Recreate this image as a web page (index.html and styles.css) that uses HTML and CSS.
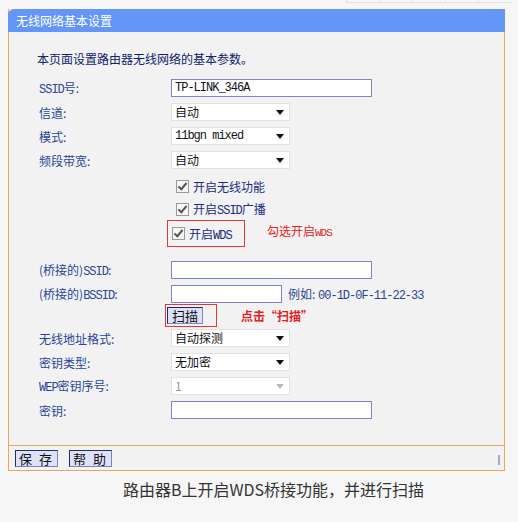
FILE: index.html
```html
<!DOCTYPE html>
<html>
<head>
<meta charset="utf-8">
<link rel="stylesheet" href="styles.css">
</head>
<body>
<div class="topline"><span></span><span></span><span></span><span></span><span></span></div>
<div class="panel">
  <div class="title">无线网络基本设置</div>
  <div class="content">
    <div class="intro">本页面设置路由器无线网络的基本参数。</div>
    <div class="row"><div class="label"><span class="m">SSID</span>号:</div><div class="input wide mono">TP-LINK_346A</div></div>
    <div class="row"><div class="label">信道:</div><div class="select">自动<i class="arrow"></i></div></div>
    <div class="row"><div class="label">模式:</div><div class="select mono">11bgn mixed<i class="arrow"></i></div></div>
    <div class="row"><div class="label">频段带宽:</div><div class="select">自动<i class="arrow"></i></div></div>
    <div class="row chk"><div class="label"></div><div class="check"><span class="box"></span><span>开启无线功能</span></div></div>
    <div class="row chk2"><div class="label"></div><div class="check"><span class="box"></span><span>开启<span class="m">SSID</span>广播</span></div></div>
    <div class="row wds"><div class="label"></div><div class="redbox"><div class="check"><span class="box"></span><span>开启<span class="m">WDS</span></span></div></div><div class="note">勾选开启<span class="m">WDS</span></div></div>
    <div class="row gapb"><div class="label">(桥接的)<span class="m">SSID</span>:</div><div class="input wide"></div></div>
    <div class="row bssid"><div class="label">(桥接的)<span class="m">BSSID</span>:</div><div class="input narrow"></div><div class="eg">例如: <span class="m">00-1D-0F-11-22-33</span></div></div>
    <div class="row scan"><div class="label"></div><div class="redbox2"><span class="btn">扫描</span></div><div class="note2">点击“扫描”</div></div>
    <div class="row"><div class="label">无线地址格式:</div><div class="select">自动探测<i class="arrow"></i></div></div>
    <div class="row"><div class="label">密钥类型:</div><div class="select">无加密<i class="arrow"></i></div></div>
    <div class="row"><div class="label"><span class="m">WEP</span>密钥序号:</div><div class="select dis">1<i class="arrow"></i></div></div>
    <div class="row"><div class="label">密钥:</div><div class="input wide"></div></div>
  </div>
  <div class="footer"><span class="fbtn">保 存</span><span class="fbtn">帮 助</span><i class="tick"></i></div>
</div>
<div class="caption">路由器B上开启WDS桥接功能，并进行扫描</div>
</body>
</html>
```

FILE: styles.css
```css
html, body { margin: 0; padding: 0; }
body {
  width: 518px;
  height: 522px;
  background: #f6f6f6;
  font-family: "Noto Sans CJK SC", "Noto Sans", sans-serif;
  font-size: 12px;
  overflow: hidden;
}
.topline {
  height: 3px;
  display: flex;
  justify-content: flex-end;
  padding-right: 7px;
}
.topline span {
  width: 32px;
  border-left: 1px solid #e4e4e4;
  border-bottom: 1px solid #e4e4e4;
}
.panel {
  margin: 6px 0 0 8px;
  width: 495px;
  border-left: 1px solid #e4a860;
  border-right: 1px solid #e4a860;
  border-bottom: 1px solid #e4a860;
  background: #f2f2f2;
}
.title {
  height: 23px;
  line-height: 23px;
  background: #6396f7;
  color: #fff;
  padding-left: 8px;
  border-top-left-radius: 6px;
  margin-left: -1px;
  margin-right: -1px;
}
.content {
  padding: 0 0 23px 28px;
}
.intro {
  height: 44px;
  line-height: 54px;
  color: #11236b;
}
.m { font-family: "Liberation Mono", monospace; font-size: 12px; letter-spacing: -1px; }
.mono { font-family: "Liberation Mono", monospace; letter-spacing: -1px; }
.row {
  height: 24px;
  display: flex;
  align-items: center;
}
.label {
  width: 134px;
  padding-left: 2px;
  box-sizing: border-box;
  color: #2a4596;
  flex: none;
}
.input {
  height: 18px;
  box-sizing: border-box;
  border: 1px solid #7f84c6;
  background: #fff;
  line-height: 16px;
  padding-left: 3px;
  color: #111;
}
.input.wide { width: 201px; }
.input.narrow { width: 111px; }
.select {
  position: relative;
  width: 119px;
  height: 18px;
  box-sizing: border-box;
  border: 1px solid #e2e2e2;
  background: #fff;
  line-height: 16px;
  padding-left: 3px;
  color: #111;
}
.select.dis { color: #999; }
.arrow {
  position: absolute;
  right: 5px;
  top: 6px;
  width: 0; height: 0;
  border-left: 4px solid transparent;
  border-right: 4px solid transparent;
  border-top: 5px solid #111;
}
.select.dis .arrow { border-top-color: #bbb; }
.check {
  display: flex;
  align-items: center;
  color: #1a2c80;
  padding-left: 5px;
}
.box {
  width: 11px;
  height: 11px;
  border: 1px solid #9a9a9a;
  background: #f6f6f6;
  margin-right: 4px;
  position: relative;
  flex: none;
}
.box::after {
  content: "";
  position: absolute;
  left: 3px;
  top: 0px;
  width: 3px;
  height: 7px;
  border-right: 2px solid #555;
  border-bottom: 2px solid #555;
  transform: rotate(40deg);
}
.chk { height: 24px; margin-top: 2px; }
.chk2 { height: 22px; }
.wds { height: 27px; }
.redbox {
  margin-left: -4px;
  width: 78px;
  height: 27px;
  box-sizing: border-box;
  border: 1px solid #e0393a;
  display: flex;
  align-items: center;
  padding-left: 3px;
}
.redbox .check { padding-left: 1px; }
.note {
  margin-left: 22px;
  margin-top: -6px;
  color: #e22222;
}
.note .m { font-size: 11px; }
.gapb { margin-top: 11px; }
.bssid { height: 23px; }
.eg {
  margin-left: 6px;
  color: #2a4596;
}
.scan { height: 21px; }
.redbox2 {
  margin-left: -6px;
  width: 52px;
  height: 23px;
  flex: none;
  box-sizing: border-box;
  border: 1px solid #e0393a;
  display: flex;
  align-items: center;
  padding-left: 1px;
}
.btn {
  height: 17px;
  line-height: 15px;
  box-sizing: border-box;
  padding: 0 4px;
  background: #dde2f7;
  border: 1px solid #202a6a;
  border-right-color: #8088b8;
  border-bottom-color: #8088b8;
  color: #111;
  font-size: 13px;
}
.note2 {
  margin-left: 24px;
  color: #e22222;
  font-weight: 600;
}
.footer {
  border-top: 1px solid #e4a860;
  height: 24px;
  display: flex;
  align-items: center;
  padding-left: 6px;
  gap: 11px;
  position: relative;
}
.fbtn {
  height: 17px;
  line-height: 15px;
  box-sizing: border-box;
  width: 43px;
  text-align: center;
  background: #dde2f9;
  border: 1px solid #1f2c6d;
  border-right-color: #7a82b6;
  border-bottom-color: #7a82b6;
  color: #111;
  font-size: 13px;
  letter-spacing: 2px;
}
.tick {
  position: absolute;
  right: 4px;
  top: 9px;
  width: 2px;
  height: 10px;
  background: #a8a8c8;
}
.caption {
  margin-top: 6px;
  text-align: center;
  font-size: 16px;
  color: #333;
  padding-left: 29px;
}
```
